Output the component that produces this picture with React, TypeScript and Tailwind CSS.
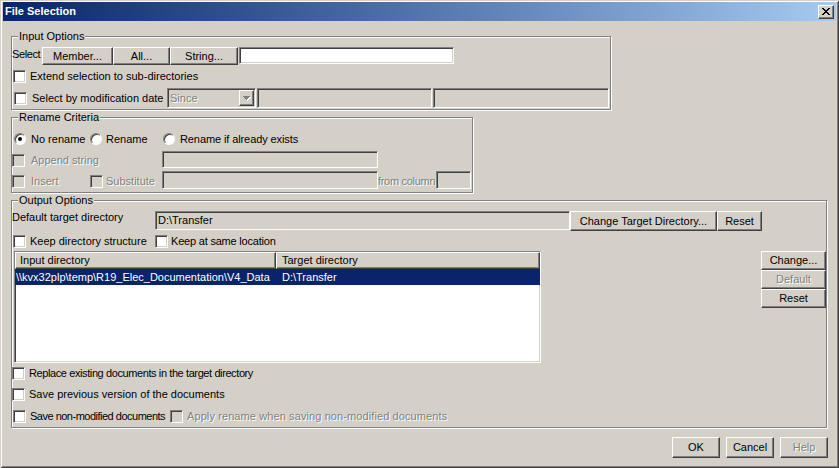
import type { ReactNode } from "react";

const raised =
  "bg-[#d4d0c8] border border-t-white border-l-white border-r-[#404040] border-b-[#404040] shadow-[inset_-1px_-1px_0_#808080]";
const sunken =
  "border border-t-[#808080] border-l-[#808080] border-r-white border-b-white shadow-[inset_1px_1px_0_#404040,inset_-1px_-1px_0_#d4d0c8]";
const dim = "text-[#808080] [text-shadow:1px_1px_0_#fff]";

function Btn({ children, className = "", disabled = false }: { children: ReactNode; className?: string; disabled?: boolean }) {
  return (
    <div className={`${raised} flex items-center justify-center whitespace-nowrap ${disabled ? dim : ""} ${className}`}>
      {children}
    </div>
  );
}

function Field({ children, className = "" }: { children?: ReactNode; className?: string }) {
  return <div className={`${sunken} flex items-center whitespace-nowrap ${className}`}>{children}</div>;
}

function Check({ disabled = false, className = "" }: { disabled?: boolean; className?: string }) {
  return <span className={`${sunken} block w-[13px] h-[13px] shrink-0 ${disabled ? "bg-[#d4d0c8]" : "bg-white"} ${className}`} />;
}

function Radio({ checked = false, className = "" }: { checked?: boolean; className?: string }) {
  return (
    <span
      className={`flex items-center justify-center w-[12px] h-[12px] shrink-0 rounded-full bg-white border border-t-[#808080] border-l-[#808080] border-r-white border-b-white shadow-[inset_1px_1px_0_#404040] ${className}`}
    >
      {checked && <span className="block w-[4px] h-[4px] rounded-full bg-black" />}
    </span>
  );
}

function Group({ title, className, children }: { title: string; className: string; children: ReactNode }) {
  return (
    <div className={`relative flex flex-col border border-[#808080] shadow-[1px_1px_0_#fff,inset_1px_1px_0_#fff] ${className}`}>
      <span className="absolute left-[6px] -top-[7px] px-[1px] bg-[#d4d0c8]">{title}</span>
      {children}
    </div>
  );
}

function CloseGlyph() {
  return (
    <svg width="8" height="7" viewBox="0 0 8 7" shapeRendering="crispEdges">
      <path
        fill="#000"
        d="M0 0h2v1h-2z M6 0h2v1h-2z M1 1h2v1h-2z M5 1h2v1h-2z M2 2h4v1h-4z M3 3h2v1h-2z M2 4h4v1h-4z M1 5h2v1h-2z M5 5h2v1h-2z M0 6h2v1h-2z M6 6h2v1h-2z"
      />
    </svg>
  );
}

function DownArrow() {
  return (
    <svg width="8" height="5" viewBox="0 0 8 5" shapeRendering="crispEdges">
      <path fill="#fff" d="M1 1h7v1h-1v1h-1v1h-1v1h-1v-1h-1v-1h-1v-1h-1z" />
      <path fill="#808080" d="M0 0h7v1h-1v1h-1v1h-1v1h-1v-1h-1v-1h-1v-1h-1z" />
    </svg>
  );
}

export default function App() {
  return (
    <div className="w-[839px] h-[468px] flex flex-col bg-[#d4d0c8] pt-[2px] px-[3px] pb-[3px] font-['Liberation_Sans',Arial,sans-serif] text-[11px] leading-[13px] text-black shadow-[inset_1px_1px_0_#d4d0c8,inset_-1px_-1px_0_#404040,inset_2px_2px_0_#fff,inset_-2px_-2px_0_#808080]">
      {/* title bar */}
      <div className="h-[19px] shrink-0 flex items-center pl-[2px] pr-[2px] bg-linear-to-r from-[#0a246a] to-[#a6caf0]">
        <span className="font-bold text-white">File Selection</span>
        <Btn className="ml-auto w-[16px] h-[14px]">
          <CloseGlyph />
        </Btn>
      </div>

      <div className="flex flex-col pl-[8px] pt-[15px]">
        {/* Input Options */}
        <Group title="Input Options" className="w-[600px] h-[74px]">
          <div className="mt-[10px] h-[18px] flex items-start">
            <span className="w-[30px] pt-[1px] whitespace-nowrap tracking-[-0.4px]">Select</span>
            <Btn className="w-[71px] h-[18px]">Member...</Btn>
            <Btn className="w-[57px] h-[18px]">All...</Btn>
            <Btn className="w-[68px] h-[18px]">String...</Btn>
            <Field className="ml-[1px] w-[215px] h-[17px] bg-white" />
          </div>
          <div className="mt-[5px] h-[13px] flex items-center">
            <Check className="ml-[1px]" />
            <span className="ml-[4px]">Extend selection to sub-directories</span>
          </div>
          <div className="mt-[5px] h-[20px] flex items-center">
            <Check className="ml-[2px]" />
            <span className="ml-[5px] w-[135px] whitespace-nowrap">Select by modification date</span>
            <Field className="w-[89px] h-[20px] bg-[#d4d0c8] pl-[2px] pr-[1px]">
              <span className={dim}>Since</span>
              <Btn className="ml-auto w-[15px] h-[16px]">
                <DownArrow />
              </Btn>
            </Field>
            <Field className="ml-[1px] w-[175px] h-[20px] bg-[#d4d0c8]" />
            <Field className="ml-[1px] w-[176px] h-[20px] bg-[#d4d0c8]" />
          </div>
        </Group>

        {/* Rename Criteria */}
        <Group title="Rename Criteria" className="mt-[7px] w-[462px] h-[76px]">
          <div className="mt-[15px] h-[12px] flex items-center">
            <Radio checked className="ml-[2px]" />
            <span className="ml-[5px] w-[59px]">No rename</span>
            <Radio />
            <span className="ml-[4px] w-[57px]">Rename</span>
            <Radio />
            <span className="ml-[5px] tracking-[-0.1px]">Rename if already exists</span>
          </div>
          <div className="mt-[6px] h-[17px] flex items-start">
            <div className="mt-[3px] flex items-center">
              <Check disabled />
              <span className={`ml-[6px] w-[131px] ${dim}`}>Append string</span>
            </div>
            <Field className="w-[216px] h-[17px] bg-[#d4d0c8]" />
          </div>
          <div className="mt-[3px] h-[18px] flex items-start">
            <div className="mt-[4px] flex items-center">
              <Check disabled />
              <span className={`ml-[6px] w-[59px] ${dim}`}>Insert</span>
              <Check disabled />
              <span className={`ml-[3px] w-[56px] ${dim}`}>Substitute</span>
            </div>
            <Field className="w-[216px] h-[18px] bg-[#d4d0c8]" />
            <span className={`w-[58px] mt-[4px] whitespace-nowrap tracking-[-0.3px] ${dim}`}>from column</span>
            <Field className="w-[35px] h-[18px] bg-[#d4d0c8]" />
          </div>
        </Group>

        {/* Output Options */}
        <Group title="Output Options" className="mt-[7px] w-[816px] h-[228px]">
          <div className="mt-[10px] h-[20px] flex items-start">
            <span className="w-[143px]">Default target directory</span>
            <Field className="w-[415px] h-[19px] bg-[#d4d0c8] pl-[2px]">D:\Transfer</Field>
            <Btn className="w-[147px] h-[20px]">Change Target Directory...</Btn>
            <Btn className="w-[45px] h-[20px]">Reset</Btn>
          </div>
          <div className="mt-[4px] h-[13px] flex items-center">
            <Check className="ml-[1px]" />
            <span className="ml-[4px] w-[125px] whitespace-nowrap">Keep directory structure</span>
            <Check />
            <span className="ml-[3px] tracking-[-0.2px]">Keep at same location</span>
          </div>
          <div className="mt-[3px] flex items-start">
            <div className={`${sunken} ml-[2px] w-[527px] h-[112px] bg-white flex flex-col`}>
              <div className="h-[17px] flex shrink-0">
                <Btn className="w-[261px] h-[17px] justify-start! pl-[4px]">Input directory</Btn>
                <Btn className="flex-1 h-[17px] justify-start! pl-[5px]">Target directory</Btn>
              </div>
              <div className="h-[16px] flex items-center bg-[#0a246a] text-white whitespace-nowrap">
                <span className="w-[261px] pl-[1px] overflow-hidden">\\kvx32plp\temp\R19_Elec_Documentation\V4_Data</span>
                <span className="pl-[6px]">D:\Transfer</span>
              </div>
            </div>
            <div className="ml-auto w-[65px] flex flex-col">
              <Btn className="h-[19px]">Change...</Btn>
              <Btn className="h-[19px]" disabled>
                Default
              </Btn>
              <Btn className="h-[19px]">Reset</Btn>
            </div>
          </div>
          <div className="mt-[4px] h-[13px] flex items-center">
            <Check />
            <span className="ml-[4px] whitespace-nowrap tracking-[-0.4px]">Replace existing documents in the target directory</span>
          </div>
          <div className="mt-[8px] h-[13px] flex items-center">
            <Check />
            <span className="ml-[4px] whitespace-nowrap">Save previous version of the documents</span>
          </div>
          <div className="mt-[9px] h-[13px] flex items-center">
            <Check className="ml-[1px]" />
            <span className="ml-[4px] w-[140px] whitespace-nowrap tracking-[-0.5px]">Save non-modified documents</span>
            <Check disabled />
            <span className={`ml-[4px] whitespace-nowrap tracking-[0.1px] ${dim}`}>Apply rename when saving non-modified documents</span>
          </div>
        </Group>

        {/* dialog buttons */}
        <div className="mt-[9px] flex justify-end gap-[6px] pr-[8px]">
          <Btn className="w-[48px] h-[21px]">OK</Btn>
          <Btn className="w-[48px] h-[21px]">Cancel</Btn>
          <Btn className="w-[48px] h-[21px]" disabled>
            Help
          </Btn>
        </div>
      </div>
    </div>
  );
}
